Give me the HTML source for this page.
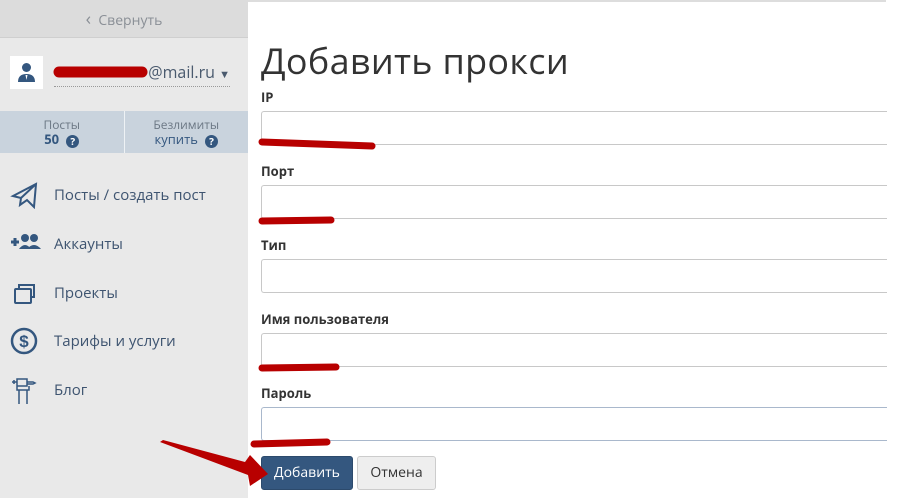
<!DOCTYPE html>
<html><head><meta charset="utf-8"><style>
*{margin:0;padding:0;box-sizing:border-box}
body{width:913px;height:498px;overflow:hidden;background:#fff;font-family:"Open Sans","Liberation Sans","DejaVu Sans",sans-serif;position:relative}
.side{position:absolute;left:0;top:0;width:248px;height:498px;background:#e9e9e9}
.hdr{height:38px;background:#dcdcdc;border-bottom:1px solid #cfcfcf;text-align:center;line-height:38px;color:#8a8f96;font-size:14px}
.user{position:absolute;left:10px;top:56px;width:33px;height:33px;background:#fff}
.mail{position:absolute;left:54px;top:61px;width:176px;height:26px;border-bottom:1px dotted #999;color:#4a5a6e;font-size:16px;text-align:right}
.stats{position:absolute;left:0;top:111px;width:248px;height:42px;background:#c9d3dd;display:flex}
.stats div{flex:1;text-align:center;font-size:12px;color:#6b7784;line-height:15px;padding-top:6px}
.stats div+div{border-left:1px solid #eef2f5}
.stats b{color:#34577f;font-size:13px}
.q{display:inline-block;width:13px;height:13px;border-radius:50%;background:#34577f;color:#fff;font-size:10px;line-height:13px;font-weight:bold;vertical-align:-1px;margin-left:4px}
.nav{position:absolute;left:0;width:248px;font-size:15px;color:#3e5470}
.nav span{position:absolute;left:54px;top:0}
.nav svg{position:absolute;left:10px;top:-4px}
.main{position:absolute;left:248px;top:0;width:638px;height:498px;border-top:2px solid #ddd}
h1{position:absolute;left:261px;top:36px;font-weight:normal;font-size:36px;color:#333;letter-spacing:.3px}
.lbl{position:absolute;left:261px;font-size:13px;font-weight:bold;color:#333}
.inp{position:absolute;left:261px;width:626px;height:34px;border:1px solid #c8c8c8;border-right:none;border-radius:3px 0 0 3px}
.btn{position:absolute;top:456px;height:34px;border-radius:3px;font-size:14px;line-height:32px;text-align:center}
</style></head><body>
<div class="side">
 <div class="hdr"><span style="font-size:18px">&lsaquo;</span>&nbsp; Свернуть</div>
 <div class="user"><svg width="33" height="33" viewBox="0 0 33 33"><circle cx="16.5" cy="11.5" r="4.5" fill="#34577f"/><path d="M8 26 Q8 18 16.5 18 Q25 18 25 26Z" fill="#34577f"/><path d="M15.5 19h2l-1 5z" fill="#fff"/></svg></div>
 <div class="mail">@mail.ru <span style="font-size:11px">▼</span></div>
 <div class="stats"><div>Посты<br><b>50</b> <span class="q">?</span></div><div>Безлимиты<br><span style="color:#34577f;font-size:13px">купить</span> <span class="q">?</span></div></div>
 <div class="nav" style="top:185px"><svg width="28" height="28" viewBox="0 0 28 28" fill="none" stroke="#34577f" stroke-width="2"><path d="M3 15 L26 3 L24 26 L17 19 L10 24 L11 17 Z M11 17 L26 3"/></svg><span>Посты / создать пост</span></div>
 <div class="nav" style="top:234px"><svg width="32" height="26" viewBox="0 0 32 26"><path d="M1 12h8M5 8v8" stroke="#34577f" stroke-width="3"/><circle cx="15" cy="8" r="4" fill="#34577f"/><circle cx="24" cy="8" r="4" fill="#34577f"/><path d="M9 19q6-8 12 0zM17 19q7-8 14 0z" fill="#34577f"/></svg><span>Аккаунты</span></div>
 <div class="nav" style="top:283px"><svg width="28" height="28" viewBox="0 0 28 28" fill="none" stroke="#34577f" stroke-width="2"><rect x="5" y="10" width="16" height="14" rx="1"/><path d="M9 10V6h15v12h-3"/></svg><span>Проекты</span></div>
 <div class="nav" style="top:331px"><svg width="28" height="28" viewBox="0 0 28 28"><circle cx="14" cy="14" r="12" fill="none" stroke="#34577f" stroke-width="2.5"/><text x="14" y="20" text-anchor="middle" font-size="17" font-weight="bold" fill="#34577f" font-family="Liberation Sans">$</text></svg><span>Тарифы и услуги</span></div>
 <div class="nav" style="top:380px"><svg width="28" height="30" viewBox="0 0 28 30" fill="none" stroke="#34577f" stroke-width="1.5"><path d="M2 6h5M4 4v4M7 3h10v7H7zM17 6h6l2 1-2 1h-6M7 10v4h12v-4M9 14v14M17 14v14"/></svg><span>Блог</span></div>
</div>
<div class="main"></div>
<h1>Добавить прокси</h1>
<div class="lbl" style="top:88px">IP</div><div class="inp" style="top:111px"></div>
<div class="lbl" style="top:162px">Порт</div><div class="inp" style="top:185px"></div>
<div class="lbl" style="top:236px">Тип</div><div class="inp" style="top:259px"></div>
<div class="lbl" style="top:310px">Имя пользователя</div><div class="inp" style="top:333px"></div>
<div class="lbl" style="top:384px">Пароль</div><div class="inp" style="top:407px;border-color:#a9b8cc"></div>
<div class="btn" style="left:261px;width:92px;background:#34577f;color:#fff;border:1px solid #2c4a6c">Добавить</div>
<div class="btn" style="left:357px;width:79px;background:#eee;color:#333;border:1px solid #ccc">Отмена</div>
<svg style="position:absolute;left:0;top:0" width="913" height="498">
 <g stroke="#b80000" stroke-linecap="round" fill="none">
  <path d="M59 72 L142 72" stroke-width="11"/>
  <path d="M262 142 L372 146" stroke-width="7"/>
  <path d="M262 221 L331 220" stroke-width="7"/>
  <path d="M262 368 L336 367" stroke-width="7"/>
  <path d="M254 444 L327 442" stroke-width="7"/>
 </g>
 <path d="M160 442 L163 440 L245 462 L250 455 L268 474 L250 486 L248 475 Z" fill="#b80000"/>
</svg>
</body></html>
